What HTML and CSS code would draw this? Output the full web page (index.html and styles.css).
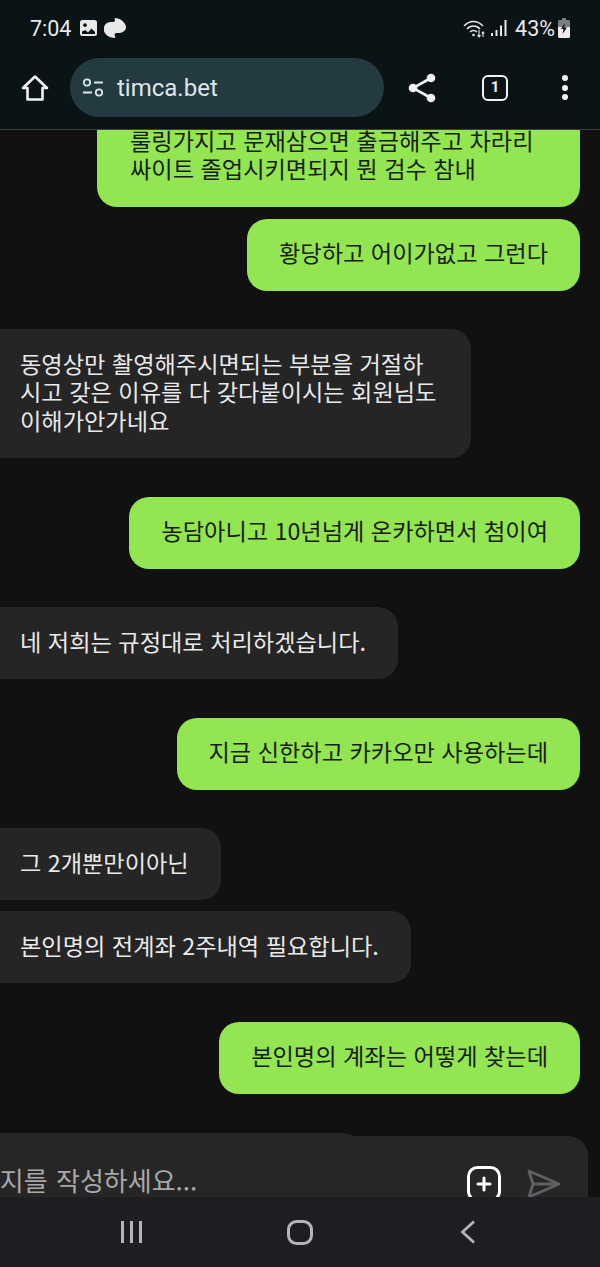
FILE: index.html
```html
<!DOCTYPE html>
<html lang="ko">
<head>
<meta charset="utf-8">
<title>timca.bet</title>
<link rel="stylesheet" href="styles.css">
</head>
<body>
<div class="phone">
  <header class="top">
    <div class="status">
      <div class="status-left">
        <span class="time">7:04</span>
        <svg class="ic-img" viewBox="0 0 17 16"><path fill="#e8e8e8" fill-rule="evenodd" d="M2.500 0h12A2.500 2.500 0 0 1 17 2.500v11a2.500 2.500 0 0 1-2.500 2.500h-12A2.500 2.500 0 0 1 0 13.500v-11A2.500 2.500 0 0 1 2.500 0zM2 11.500V14h13v-2l-3.500-3.500-3.500 4-2.500-2.500zM5 3.200a1.900 1.900 0 1 0 .01 0z"/></svg>
        <svg class="ic-cloud" viewBox="0 0 22 20"><path fill="#e8e8e8" d="M0 10C0 6 4 4 7 4c2 0 3 0 4-1 0-1 0-2-.5-3 3 0 6 1 8 3 2 2 3.500 4 3.500 6 0 4-4 6-8 6-2 0-3 0-3.500 1.500 0 1 .5 2 1 3.500-3 0-7-1-9-3-2-2-3-4-3-7z"/></svg>
      </div>
      <div class="status-right">
        <svg class="ic-wifi" viewBox="0 0 23 19" fill="none" stroke="#e8e8e8" stroke-width="1.500"><path d="M1 7c5.500-6 13.500-6 19 0M4 10c3.500-4 9.500-4 13 0M7 13c2-2 5-2 7 0"/><circle cx="10.500" cy="16" r="1.300" fill="#e8e8e8" stroke="none"/><path d="M16 11v7M14.500 16l1.500 2 1.500-2M20 18v-5M18.800 14.500l1.200-1.500 1.200 1.500" stroke-width="1.100"/></svg>
        <svg class="ic-signal" viewBox="0 0 16 16"><path fill="#e8e8e8" d="M0 13h2v3H0zM4.500 10h2v6h-2zM9 5.500h2V16H9zM13.500 0h2v16h-2z"/></svg>
        <span class="pct">43%</span>
        <svg class="ic-batt" viewBox="0 0 12 20"><path fill="#7c7f80" d="M4 0h4v2h2.500A1.500 1.500 0 0 1 12 3.500V9H0V3.500A1.500 1.500 0 0 1 1.500 2H4z"/><path fill="#ececec" d="M0 9h12v9.500a1.500 1.500 0 0 1-1.500 1.500h-9A1.500 1.500 0 0 1 0 18.500z"/><path fill="#0a1316" d="M7 5 3 11h2.500L4.500 16 9 9.500H6.300z"/></svg>
      </div>
    </div>
    <div class="toolbar">
      <svg class="ic-home" viewBox="0 0 28 28" fill="none" stroke="#f2f2f2" stroke-width="2.600" stroke-linejoin="round"><path d="M14 2.500 2 14h4.500v11.500h15V14H26z"/></svg>
      <div class="url">
        <svg class="ic-tune" viewBox="0 0 22 20" fill="none" stroke="#dfe6e8" stroke-width="1.800"><circle cx="5" cy="4.500" r="3.200"/><path d="M12 4.500h9M1 14.500h9"/><circle cx="17" cy="14.500" r="3.200"/></svg>
        <span class="url-text">timca.bet</span>
      </div>
      <svg class="ic-share" viewBox="0 0 28 30"><g fill="#f2f2f2"><circle cx="23" cy="5" r="4.300"/><circle cx="5" cy="15" r="4.300"/><circle cx="23" cy="25" r="4.300"/></g><path d="M23 5 5 15l18 10" fill="none" stroke="#f2f2f2" stroke-width="2.600"/></svg>
      <div class="tabs">1</div>
      <div class="dots"><i></i><i></i><i></i></div>
    </div>
  </header>

  <main class="chat">
    <div class="thread">
      <div class="msg out first wide">룰링가지고 문재삼으면 출금해주고 차라리<br>싸이트 졸업시키면되지 뭔 검수 참내</div>
      <div class="msg out">황당하고 어이가없고 그런다</div>
      <div class="msg in turn wide">동영상만 촬영해주시면되는 부분을 거절하<br>시고 갖은 이유를 다 갖다붙이시는 회원님도<br>이해가안가네요</div>
      <div class="msg out turn">농담아니고 10년넘게 온카하면서 첨이여</div>
      <div class="msg in turn">네 저희는 규정대로 처리하겠습니다.</div>
      <div class="msg out turn">지금 신한하고 카카오만 사용하는데</div>
      <div class="msg in turn">그 2개뿐만이아닌</div>
      <div class="msg in next">본인명의 전계좌 2주내역 필요합니다.</div>
      <div class="msg out turn">본인명의 계좌는 어떻게 찾는데</div>
      <div class="msg in turn peek"></div>
    </div>
    <div class="composer">
      <span class="placeholder">메시지를 작성하세요...</span>
      <div class="composer-icons">
        <svg class="ic-plus" viewBox="0 0 34 36" fill="none" stroke="#fff" stroke-width="3"><rect x="1.500" y="1.500" width="31" height="33" rx="9"/><path d="M17 12v12M11 18h12" stroke-linecap="round"/></svg>
        <svg class="ic-send" viewBox="0 0 34 30" fill="none" stroke="#5f6062" stroke-width="2.800" stroke-linejoin="round"><path d="M2 2 32 15 2 28l4-13zM6 15h26"/></svg>
      </div>
    </div>
  </main>

  <nav class="navbar">
    <svg class="nav-recent" viewBox="0 0 24 24"><path fill="#b4b5b6" d="M1 1h3v22H1zM10 1h3v22h-3zM19 1h3v22h-3z"/></svg>
    <svg class="nav-home" viewBox="0 0 26 25" fill="none" stroke="#b4b5b6" stroke-width="3"><rect x="1.500" y="1.500" width="23" height="22" rx="8"/></svg>
    <svg class="nav-back" viewBox="0 0 16 24" fill="none" stroke="#b4b5b6" stroke-width="2.800"><path d="M14 1.500 2.500 12 14 22.500"/></svg>
  </nav>
</div>
</body>
</html>
```

FILE: styles.css
```css
* { box-sizing: border-box; }
html, body { margin: 0; padding: 0; background: #111; }
body { font-family: "Noto Sans CJK KR", "Noto Sans", sans-serif; }
.phone { width: 600px; height: 1267px; display: flex; flex-direction: column; overflow: hidden; }

.top { height: 130px; flex: none; background: #0a1316; border-bottom: 1px solid #3a4043; }
.status { height: 58px; padding: 14px 30px 0 30px; display: flex; justify-content: space-between; align-items: flex-start; }
.status-left, .status-right { display: flex; align-items: center; height: 28px; }
.time { font: 21.500px Roboto, sans-serif; color: #e8e8e8; margin-right: 9px; }
.ic-img { width: 17px; height: 16px; margin-right: 7px; }
.ic-cloud { width: 22px; height: 20px; }
.ic-wifi { width: 23px; height: 19px; margin-right: 5px; }
.ic-signal { width: 16px; height: 16px; margin-right: 8px; }
.pct { font: 21.500px Roboto, sans-serif; color: #e8e8e8; margin-right: 3px; }
.ic-batt { width: 12px; height: 20px; }

.toolbar { display: flex; align-items: center; height: 59px; padding-left: 21px; }
.ic-home { width: 28px; height: 28px; flex: none; margin-right: 21px; }
.url { width: 314px; height: 59px; border-radius: 30px; background: #243a41; display: flex; align-items: center; padding-left: 12px; flex: none; }
.ic-tune { width: 22px; height: 20px; margin-right: 13px; }
.url-text { font: 24px Roboto, sans-serif; color: #dfe6e8; }
.ic-share { width: 28px; height: 30px; margin-left: 24px; flex: none; }
.tabs { width: 26px; height: 26px; margin-left: 46px; border: 2.500px solid #f2f2f2; border-radius: 6px; color: #f2f2f2; font: 700 15px/21px Roboto, sans-serif; text-align: center; flex: none; }
.dots { margin-left: 54px; display: flex; flex-direction: column; gap: 3.500px; }
.dots i { display: block; width: 6px; height: 6px; border-radius: 50%; background: #f2f2f2; }

.chat { flex: 1; min-height: 0; overflow: hidden; background: #111; display: flex; flex-direction: column; }
.thread { display: flex; flex-direction: column; align-items: flex-start; flex: none; padding-right: 20px; }
.msg { font-size: 23.200px; line-height: 28.500px; padding: 19.500px 32px 24px; border-radius: 20px; white-space: nowrap; }
.out { background: #94e552; color: #14200b; align-self: flex-end; margin-top: 12px; }
.in { background: #252525; color: #e9e9e9; margin-left: -22px; padding-left: 42px; }
.wide { width: 483px; }
.in.wide { width: 493px; }
.turn { margin-top: 38.500px; }
.next { margin-top: 11px; }
.first { margin-top: -24px; padding-left: 33px; }
.peek { width: 380px; height: 30px; padding: 0; margin-top: 39px; margin-bottom: -27px; }

.composer { position: relative; flex: none; height: 100px; width: 600px; margin-left: -12px; background: #262626; border-radius: 20px; display: flex; justify-content: space-between; padding: 26px 27px 0 0; }
.placeholder { font-size: 26px; line-height: 36px; word-spacing: 1px; color: #a8a8a8; margin-left: -36px; white-space: nowrap; }
.composer-icons { display: flex; align-items: flex-start; gap: 26px; padding-top: 4px; }
.ic-plus { width: 34px; height: 36px; }
.ic-send { width: 34px; height: 30px; margin-top: 3px; }

.navbar { flex: none; height: 70px; background: #1c1e22; display: flex; align-items: center; padding-left: 120px; }
.nav-recent { width: 24px; height: 24px; margin-right: 143px; }
.nav-home { width: 26px; height: 25px; margin-right: 147px; }
.nav-back { width: 16px; height: 24px; }
```
